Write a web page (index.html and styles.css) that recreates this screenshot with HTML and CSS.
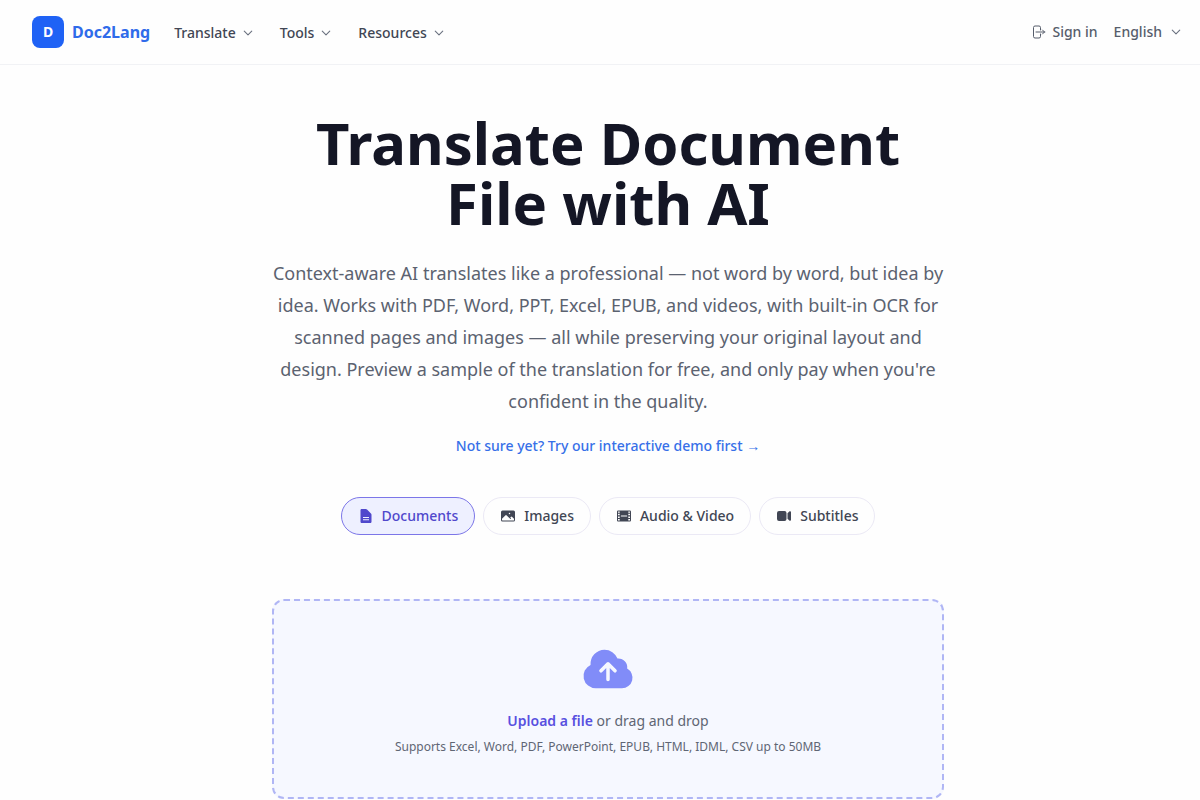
FILE: index.html
```html
<!DOCTYPE html>
<html lang="en">
<head>
<meta charset="utf-8">
<meta name="viewport" content="width=device-width, initial-scale=1">
<title>Doc2Lang</title>
<link rel="stylesheet" href="styles.css">
</head>
<body>
<svg class="sprite" aria-hidden="true">
  <symbol id="chevron" viewBox="0 0 24 24"><path fill="none" stroke="currentColor" stroke-width="2.2" stroke-linecap="round" stroke-linejoin="round" d="m19.5 8.25-7.5 7.5-7.5-7.5"/></symbol>
</svg>
<header class="header">
  <a class="brand" href="#"><span class="brand-mark">D</span><span class="brand-name">Doc2Lang</span></a>
  <nav class="nav" aria-label="Main">
    <button class="nav-item" type="button">Translate<svg class="chevron"><use href="#chevron"/></svg></button>
    <button class="nav-item" type="button">Tools<svg class="chevron"><use href="#chevron"/></svg></button>
    <button class="nav-item" type="button">Resources<svg class="chevron"><use href="#chevron"/></svg></button>
  </nav>
  <div class="account">
    <a class="sign-in" href="#"><svg class="icon" viewBox="0 0 24 24" fill="none" stroke="currentColor" stroke-width="1.5" stroke-linecap="round" stroke-linejoin="round"><path d="M15.75 9V5.25A2.25 2.25 0 0 0 13.5 3h-6a2.25 2.25 0 0 0-2.25 2.25v13.5A2.25 2.25 0 0 0 7.5 21h6a2.25 2.25 0 0 0 2.25-2.25V15m3 0 3-3m0 0-3-3m3 3H9"/></svg>Sign in</a>
    <button class="language" type="button">English<svg class="chevron"><use href="#chevron"/></svg></button>
  </div>
</header>
<main class="hero">
  <h1 class="title">Translate Document File with AI</h1>
  <p class="lead">Context-aware AI translates like a professional — not word by word, but idea by idea. Works with PDF, Word, PPT, Excel, EPUB, and videos, with built-in OCR for scanned pages and images — all while preserving your original layout and design. Preview a sample of the translation for free, and only pay when you're confident in the quality.</p>
  <a class="demo" href="#">Not sure yet? Try our interactive demo first →</a>
  <div class="kinds">
    <button class="kind kind-active" type="button" aria-pressed="true"><svg class="icon" viewBox="0 0 24 24" fill="currentColor"><path fill-rule="evenodd" d="M5.625 1.5c-1.036 0-1.875.84-1.875 1.875v17.25c0 1.035.84 1.875 1.875 1.875h12.75c1.035 0 1.875-.84 1.875-1.875V10.2c0-.7-.3-1.4-.8-1.9l-5.9-6c-.5-.5-1.200-.8-1.900-.8H5.625ZM7.500 13.500h9v1.500h-9v-1.500Zm0 3.400h9v1.500h-9v-1.500Z"/></svg>Documents</button>
    <button class="kind" type="button"><svg class="icon" viewBox="0 0 24 24" fill="currentColor"><path fill-rule="evenodd" d="M1.5 6a2.25 2.25 0 0 1 2.25-2.25h16.5A2.25 2.25 0 0 1 22.5 6v12a2.25 2.25 0 0 1-2.25 2.25H3.75A2.25 2.25 0 0 1 1.5 18V6ZM3 16.06V18c0 .414.336.75.75.75h16.5A.75.75 0 0 0 21 18v-1.94l-2.69-2.689a1.5 1.5 0 0 0-2.12 0l-.88.879.97.97a.75.75 0 1 1-1.06 1.06l-5.16-5.159a1.5 1.5 0 0 0-2.12 0L3 16.061Zm10.125-7.81a1.125 1.125 0 1 1 2.25 0 1.125 1.125 0 0 1-2.25 0Z"/></svg>Images</button>
    <button class="kind" type="button"><svg class="icon" viewBox="0 0 24 24" fill="currentColor"><path fill-rule="evenodd" d="M3.4 3.75h17.2c1 0 1.9.85 1.9 1.9v12.7c0 1.05-.9 1.9-1.9 1.9H3.4c-1 0-1.9-.85-1.9-1.9V5.65c0-1.05.9-1.9 1.9-1.9ZM3 5.6v1.6h2.6V5.25H3.4A.4.4 0 0 0 3 5.6Zm0 3.1v2.2h2.6V8.7H3Zm0 4.1v2.1h2.6v-2.1H3Zm0 3.8v1.8c0 .2.2.35.4.35h2.2V16.6H3ZM18.4 5.25V7.2H21V5.6a.4.4 0 0 0-.4-.35h-2.2Zm0 3.45v2.2H21V8.7h-2.6Zm0 4.1v2.1H21v-2.1h-2.6Zm0 3.8v2.15h2.2c.2 0 .4-.15.4-.35v-1.8h-2.6ZM7.9 11.25a.75.75 0 0 0 0 1.5h8.2a.75.75 0 0 0 0-1.5H7.9Z"/></svg>Audio &amp; Video</button>
    <button class="kind" type="button"><svg class="icon" viewBox="0 0 24 24" fill="currentColor"><path d="M4.5 4.5a3 3 0 0 0-3 3v9a3 3 0 0 0 3 3h8.25a3 3 0 0 0 3-3v-9a3 3 0 0 0-3-3H4.5ZM19.94 18.75l-2.69-2.69V7.94l2.69-2.69c.944-.945 2.56-.276 2.56 1.06v11.38c0 1.336-1.616 2.005-2.56 1.06Z"/></svg>Subtitles</button>
  </div>
  <section class="dropzone" aria-label="File upload">
    <svg class="cloud" viewBox="0 0 24 24" fill="currentColor"><path fill-rule="evenodd" d="M10.5 3.75a6 6 0 0 0-5.98 6.496A5.25 5.25 0 0 0 6.75 20.25H18a4.5 4.5 0 0 0 2.206-8.423 3.75 3.75 0 0 0-4.133-4.303A6.001 6.001 0 0 0 10.5 3.75Zm2.03 5.47a.75.75 0 0 0-1.06 0l-3 3a.75.75 0 1 0 1.06 1.06l1.72-1.72v4.94a.75.75 0 0 0 1.5 0v-4.94l1.72 1.72a.75.75 0 1 0 1.06-1.06l-3-3Z"/></svg>
    <p class="drop-text"><button class="upload" type="button">Upload a file</button> or drag and drop</p>
    <p class="drop-note">Supports Excel, Word, PDF, PowerPoint, EPUB, HTML, IDML, CSV up to 50MB</p>
  </section>
</main>
</body>
</html>
```
FILE: styles.css
```css
* {
  box-sizing: border-box;
}

body {
  margin: 0;
  background: #fefefe;
  color: #414654;
  font-family: "Noto Sans", sans-serif;
  font-size: 14px;
  line-height: 20px;
}

button {
  border: 0;
  padding: 0;
  background: none;
  color: inherit;
  font: inherit;
  cursor: pointer;
}

a {
  color: inherit;
  text-decoration: none;
}

p,
h1 {
  margin: 0;
}

.sprite {
  display: none;
}

.icon {
  width: 16px;
  height: 16px;
  flex: none;
}

.chevron {
  width: 12px;
  height: 12px;
  flex: none;
  color: #6b7280;
}

.header {
  display: flex;
  align-items: center;
  gap: 24px;
  height: 65px;
  padding: 0 18px 0 32px;
  border-bottom: 1px solid #f1f2f5;
}

.brand {
  display: flex;
  align-items: center;
  gap: 8px;
}

.brand-mark {
  display: grid;
  place-items: center;
  width: 32px;
  height: 32px;
  border-radius: 8px;
  background: #1f62f5;
  color: #fff;
  font-weight: 700;
}

.brand-name {
  color: #2f6bea;
  font-size: 16px;
  font-weight: 700;
}

.nav {
  display: flex;
  gap: 26px;
  padding-top: 2px;
}

.nav-item,
.sign-in,
.language {
  display: flex;
  align-items: center;
  gap: 6px;
  font-weight: 500;
}

.account {
  display: flex;
  gap: 16px;
  margin-left: auto;
  color: #565d6b;
}

.language {
  gap: 8px;
}

.hero {
  display: flex;
  flex-direction: column;
  align-items: center;
  padding: 48px 16px 0 32px;
  text-align: center;
}

.title {
  max-width: 672px;
  color: #141625;
  font-size: 58px;
  font-weight: 700;
  line-height: 60px;
}

.lead {
  max-width: 672px;
  margin-top: 24px;
  color: #5b6270;
  font-size: 18px;
  line-height: 32px;
}

.demo {
  margin-top: 19px;
  color: #3770e8;
  font-weight: 500;
}

.kinds {
  display: flex;
  flex-wrap: wrap;
  justify-content: center;
  gap: 8px;
  margin-top: 41px;
}

.kind {
  display: flex;
  align-items: center;
  gap: 8px;
  padding: 8px 16px;
  border: 1px solid #ebe9f5;
  border-radius: 20px;
  background: #fefefe;
  font-weight: 500;
}

.kind-active {
  border-color: #7c76e8;
  background: #eef0ff;
  color: #5048cc;
}

.dropzone {
  display: flex;
  flex-direction: column;
  align-items: center;
  width: 100%;
  max-width: 672px;
  margin-top: 64px;
  padding: 40px 24px 42px;
  border: 2px dashed #b0b6f5;
  border-radius: 12px;
  background: #f6f8ff;
  color: #5f6674;
}

.cloud {
  width: 56px;
  height: 56px;
  color: #818cf8;
}

.drop-text {
  margin-top: 14px;
}

.upload {
  color: #5850e0;
  font-weight: 600;
}

.drop-note {
  margin-top: 8px;
  font-size: 12px;
  line-height: 16px;
}
```
